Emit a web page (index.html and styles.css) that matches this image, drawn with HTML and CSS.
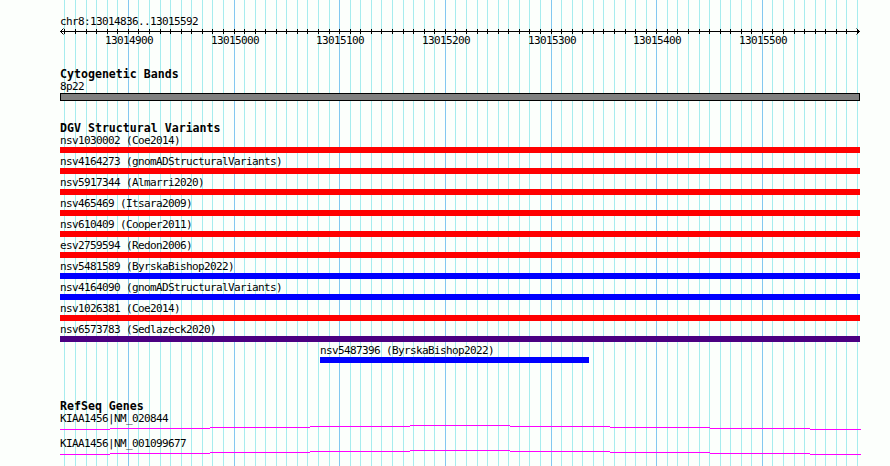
FILE: index.html
```html
<!DOCTYPE html>
<html lang="en">
<head>
    <meta charset="UTF-8">
    <title>chr8:13014836..13015592</title>
    <link rel="stylesheet" href="styles.css">
</head>
<body>
    <div class="panel">
        <!-- grid behind all tracks, one line every 10 bp -->
        <svg class="grid" width="890" height="466" shape-rendering="crispEdges">
            <path class="minor" d="M64.5 0V466M75.5 0V466M86.5 0V466M96.5 0V466M107.5 0V466M117.5 0V466M138.5 0V466M149.5 0V466M160.5 0V466M170.5 0V466M181.5 0V466M191.5 0V466M202.5 0V466M212.5 0V466M223.5 0V466M244.5 0V466M255.5 0V466M265.5 0V466M276.5 0V466M286.5 0V466M297.5 0V466M307.5 0V466M318.5 0V466M329.5 0V466M350.5 0V466M360.5 0V466M371.5 0V466M381.5 0V466M392.5 0V466M403.5 0V466M413.5 0V466M424.5 0V466M434.5 0V466M455.5 0V466M466.5 0V466M477.5 0V466M487.5 0V466M498.5 0V466M508.5 0V466M519.5 0V466M529.5 0V466M540.5 0V466M561.5 0V466M572.5 0V466M582.5 0V466M593.5 0V466M603.5 0V466M614.5 0V466M625.5 0V466M635.5 0V466M646.5 0V466M667.5 0V466M677.5 0V466M688.5 0V466M699.5 0V466M709.5 0V466M720.5 0V466M730.5 0V466M741.5 0V466M751.5 0V466M772.5 0V466M783.5 0V466M794.5 0V466M804.5 0V466M815.5 0V466M825.5 0V466M836.5 0V466M846.5 0V466M857.5 0V466"/>
            <path class="major" d="M128.5 0V466M234.5 0V466M339.5 0V466M445.5 0V466M551.5 0V466M656.5 0V466M762.5 0V466"/>
        </svg>

        <div class="content">
            <!-- ruler -->
            <div class="ruler">
                <div class="small indent">chr8:13014836..13015592</div>
                <svg class="scale" width="890" height="40">
                    <g shape-rendering="crispEdges">
                        <path class="axis" d="M60 3.5H860"/>
                        <path class="axis" d="M64.5 1v5M75.5 1v5M86.5 1v5M96.5 1v5M107.5 1v5M117.5 1v5M128.5 1v5M138.5 1v5M149.5 1v5M160.5 1v5M170.5 1v5M181.5 1v5M191.5 1v5M202.5 1v5M212.5 1v5M223.5 1v5M234.5 1v5M244.5 1v5M255.5 1v5M265.5 1v5M276.5 1v5M286.5 1v5M297.5 1v5M307.5 1v5M318.5 1v5M329.5 1v5M339.5 1v5M350.5 1v5M360.5 1v5M371.5 1v5M381.5 1v5M392.5 1v5M403.5 1v5M413.5 1v5M424.5 1v5M434.5 1v5M445.5 1v5M455.5 1v5M466.5 1v5M477.5 1v5M487.5 1v5M498.5 1v5M508.5 1v5M519.5 1v5M529.5 1v5M540.5 1v5M551.5 1v5M561.5 1v5M572.5 1v5M582.5 1v5M593.5 1v5M603.5 1v5M614.5 1v5M625.5 1v5M635.5 1v5M646.5 1v5M656.5 1v5M667.5 1v5M677.5 1v5M688.5 1v5M699.5 1v5M709.5 1v5M720.5 1v5M730.5 1v5M741.5 1v5M751.5 1v5M762.5 1v5M772.5 1v5M783.5 1v5M794.5 1v5M804.5 1v5M815.5 1v5M825.5 1v5M836.5 1v5M846.5 1v5M857.5 1v5"/>
                    </g>
                    <path class="axis" d="M63.5 0.5L60.5 3.5L63.5 6.5M856.5 0.5L859.5 3.5L856.5 6.5"/>
                    <g class="nums">
                        <text x="129" y="16">13014900</text>
                        <text x="235" y="16">13015000</text>
                        <text x="340" y="16">13015100</text>
                        <text x="446" y="16">13015200</text>
                        <text x="552" y="16">13015300</text>
                        <text x="657" y="16">13015400</text>
                        <text x="763" y="16">13015500</text>
                    </g>
                </svg>
            </div>

            <!-- Cytogenetic Bands -->
            <div class="track cyto">
                <div class="title">Cytogenetic Bands</div>
                <div class="small">8p22</div>
                <div class="band"></div>
            </div>

            <!-- DGV Structural Variants -->
            <div class="track dgv">
                <div class="title">DGV Structural Variants</div>
                <div class="row">
                    <div class="small">nsv1030002 (Coe2014)</div>
                    <div class="bar red"></div>
                </div>
                <div class="row">
                    <div class="small">nsv4164273 (gnomADStructuralVariants)</div>
                    <div class="bar red"></div>
                </div>
                <div class="row">
                    <div class="small">nsv5917344 (Almarri2020)</div>
                    <div class="bar red"></div>
                </div>
                <div class="row">
                    <div class="small">nsv465469 (Itsara2009)</div>
                    <div class="bar red"></div>
                </div>
                <div class="row">
                    <div class="small">nsv610409 (Cooper2011)</div>
                    <div class="bar red"></div>
                </div>
                <div class="row">
                    <div class="small">esv2759594 (Redon2006)</div>
                    <div class="bar red"></div>
                </div>
                <div class="row">
                    <div class="small">nsv5481589 (ByrskaBishop2022)</div>
                    <div class="bar blue"></div>
                </div>
                <div class="row">
                    <div class="small">nsv4164090 (gnomADStructuralVariants)</div>
                    <div class="bar blue"></div>
                </div>
                <div class="row">
                    <div class="small">nsv1026381 (Coe2014)</div>
                    <div class="bar red"></div>
                </div>
                <div class="row">
                    <div class="small">nsv6573783 (Sedlazeck2020)</div>
                    <div class="bar purple"></div>
                </div>
                <div class="row shifted">
                    <div class="small">nsv5487396 (ByrskaBishop2022)</div>
                    <div class="bar blue" style="width: 269px;"></div>
                </div>
            </div>

            <!-- RefSeq Genes -->
            <div class="track refseq">
                <div class="title">RefSeq Genes</div>
                <div class="gene">
                    <div class="small">KIAA1456|NM_020844</div>
                    <svg class="gene-line" width="801" height="13" shape-rendering="crispEdges">
                        <path d="M0 4.5H50M50 3.5H150M150 2.5H250M250 1.5H350M350 0.5H450M450 1.5H550M550 2.5H650M650 3.5H750M750 4.5H801"/>
                    </svg>
                </div>
                <div class="gene">
                    <div class="small">KIAA1456|NM_001099677</div>
                    <svg class="gene-line" width="801" height="13" shape-rendering="crispEdges">
                        <path d="M0 4.5H50M50 3.5H150M150 2.5H250M250 1.5H350M350 0.5H450M450 1.5H550M550 2.5H650M650 3.5H750M750 4.5H801"/>
                    </svg>
                </div>
            </div>
        </div>
    </div>
</body>
</html>
```

FILE: styles.css
```css
body {
    margin: 0;
    background-color: #fcfffc;
    color: #000;
}

.panel {
    position: relative;
    width: 890px;
    height: 466px;
    overflow: hidden;
}

.grid {
    position: absolute;
    top: 0;
    left: 0;
}

.grid .minor {
    stroke: #a6ecee;
    stroke-width: 1;
}

.grid .major {
    stroke: #82c8f0;
    stroke-width: 1;
}

.content {
    position: relative;
}

.small {
    font: 11px/12px "DejaVu Sans Mono", monospace;
    letter-spacing: -0.62px;
    white-space: nowrap;
}

.title {
    font: bold 11.6px/13px "DejaVu Sans Mono", monospace;
    white-space: nowrap;
}

.indent {
    padding-left: 60px;
}

/* ruler */
.ruler {
    padding-top: 16px;
}

.scale {
    display: block;
}

.axis {
    fill: none;
    stroke: #000;
    stroke-width: 1;
}

.nums text {
    font: 11px "DejaVu Sans Mono", monospace;
    letter-spacing: -0.62px;
    text-anchor: middle;
    fill: #000;
}

/* tracks */
.track {
    padding-left: 60px;
}

.band {
    width: 798px;
    height: 6px;
    border: 1px solid #000;
    background-color: #808080;
}

.dgv {
    padding-top: 21px;
}

.row {
    margin-bottom: 3px;
}

.bar {
    width: 800px;
    height: 6px;
}

.red {
    background-color: #ff0000;
}

.blue {
    background-color: #0000ff;
}

.purple {
    background-color: #4b0082;
}

.shifted {
    margin-left: 260px;
}

.refseq {
    padding-top: 34px;
}

.gene-line {
    display: block;
}

.gene-line path {
    fill: none;
    stroke: #ff00ff;
    stroke-width: 1;
}
```
